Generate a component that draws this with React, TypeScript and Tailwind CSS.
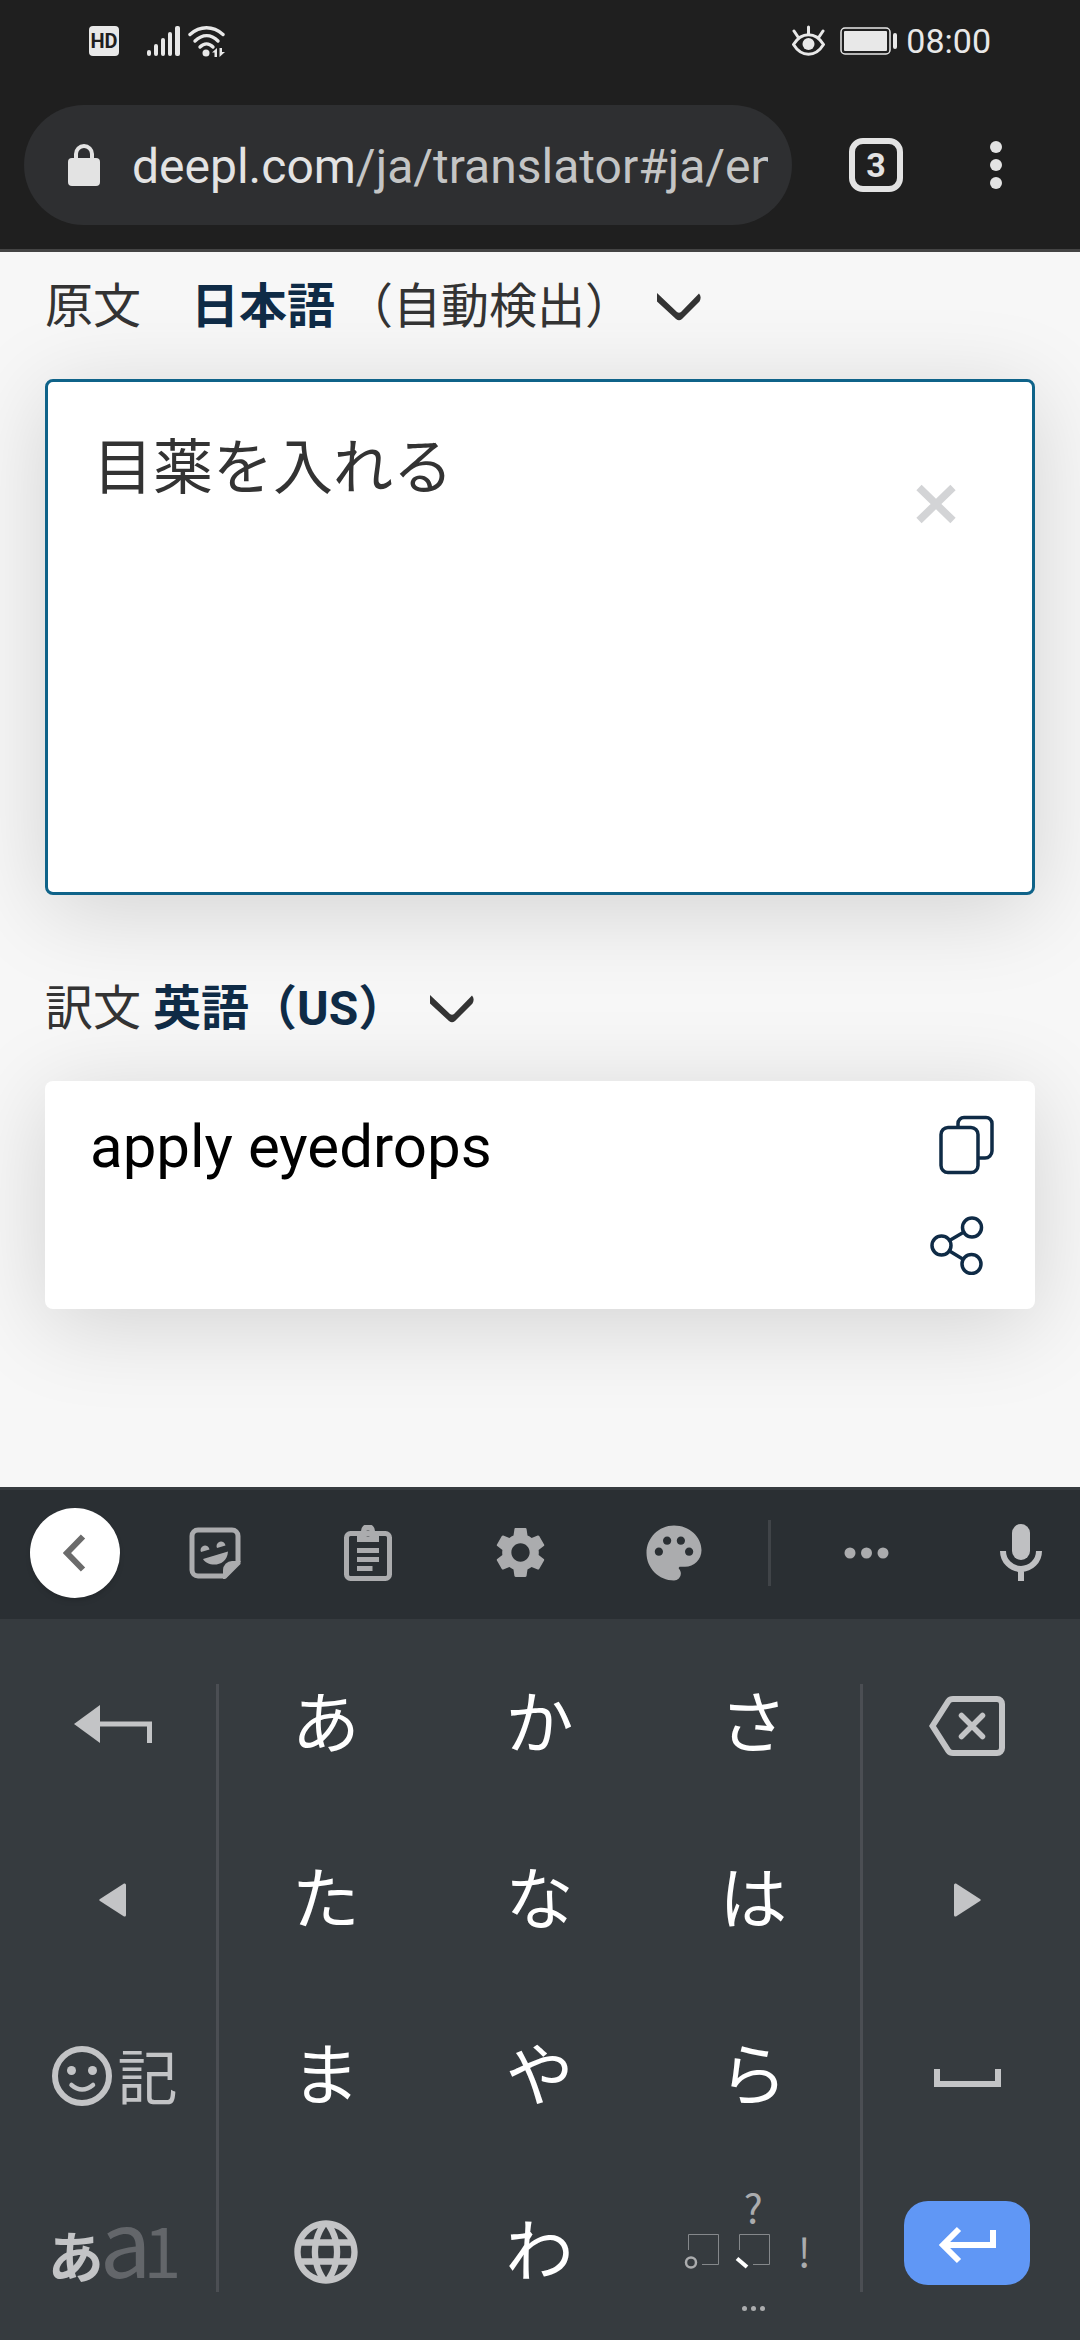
import { useState, type ReactNode } from "react";
import { MdSettings, MdPalette, MdLanguage } from "react-icons/md";

const JP = "font-['Roboto','Noto_Sans_CJK_JP',sans-serif]";
const KANA = "font-['Noto_Sans_CJK_JP',sans-serif]";

function StatusBar() {
  return (
    <div className="flex h-[81px] items-center justify-between px-[89px] text-[#e8e8e8]">
      <div className="flex items-center">
        <span className="flex size-[30px] items-center justify-center rounded-[4px] bg-[#e8e8e8] text-[20px] leading-none font-bold text-[#1f1f1f]">
          HD
        </span>
        <svg className="ml-7 h-[30px] w-[33px]" viewBox="0 0 33 30" fill="currentColor" aria-label="Signal">
          <rect x="0" y="24" width="4" height="6" rx="2" />
          <rect x="7" y="18" width="4" height="12" rx="2" />
          <rect x="14" y="12" width="4" height="18" rx="2" />
          <rect x="21" y="6" width="4" height="24" rx="2" />
          <rect x="28" y="0" width="5" height="30" rx="2" />
        </svg>
        <svg className="ml-2 h-[32px] w-[38px]" viewBox="0 0 38 32" aria-label="Wi-Fi">
          <g fill="none" stroke="currentColor" strokeWidth="3.4" strokeLinecap="round">
            <path d="M2 9.5C12 0.500 25 0.500 35 9.500" />
            <path d="M7 16C14.500 9 23 9 30 16" />
            <path d="M12 22C16 18 21 18 25 22" />
          </g>
          <g fill="currentColor">
            <circle cx="18" cy="28" r="3.500" />
            <path d="M29 23v9h-2.500v-4.500H24zM31.500 23v9l5.500-5h-3v-4z" />
          </g>
        </svg>
      </div>
      <div className="flex items-center">
        <svg className="h-[32px] w-[33px]" viewBox="0 0 33 32" fill="none" stroke="currentColor" strokeWidth="3" strokeLinecap="round" aria-label="Eye comfort">
          <path d="M1.500 19.500C9.500 6.500 23.500 6.500 31.500 19.500C23.500 32.500 9.500 32.500 1.500 19.500Z" strokeLinejoin="round" />
          <circle cx="16.500" cy="19" r="6" fill="currentColor" stroke="none" />
          <path d="M16.500 2v7M2 6l4 6M31 6l-4 6" />
        </svg>
        <svg className="ml-[15px] h-[28px] w-[58px]" viewBox="0 0 58 28" aria-label="Battery">
          <rect x="1" y="1" width="49" height="26" rx="4" fill="none" stroke="currentColor" strokeWidth="1.500" />
          <rect x="4" y="4" width="43" height="20" rx="1" fill="currentColor" />
          <rect x="53" y="6" width="4" height="16" rx="2" fill="currentColor" />
        </svg>
        <time className="ml-2 text-[34px] leading-none">08:00</time>
      </div>
    </div>
  );
}

function BrowserBar() {
  return (
    <div className="flex items-center py-6 pl-6">
      <button type="button" aria-label="Address" className="flex h-[120px] min-w-0 flex-1 items-center rounded-full bg-[#2e2f31] pr-6 pl-[44px]">
        <svg className="h-[42px] w-[32px] shrink-0" viewBox="0 0 32 42" aria-hidden="true">
          <path d="M8 16V10a8 8 0 0 1 16 0v6" fill="none" stroke="#e3e3e3" strokeWidth="4" />
          <rect x="0" y="14" width="32" height="28" rx="4" fill="#e3e3e3" />
        </svg>
        <span className="ml-8 min-w-0 flex-1 overflow-hidden pt-1 text-left text-[48px] leading-[64px] whitespace-nowrap text-[#c4c5c5]">
          <span className="text-[#e3e3e3]">deepl.com</span>/ja/translator#ja/en
        </span>
      </button>
      <button type="button" aria-label="3 open tabs" className="ml-[57px] flex size-[54px] shrink-0 items-center justify-center rounded-[14px] border-6 border-[#e3e3e3] text-[34px] leading-none font-bold text-[#e3e3e3]">
        3
      </button>
      <button type="button" aria-label="More options" className="flex w-[177px] shrink-0 justify-center pl-[9px]">
        <svg className="h-[50px] w-[12px]" viewBox="0 0 12 50" fill="#e3e3e3">
          <circle cx="6" cy="7" r="6" />
          <circle cx="6" cy="25" r="6" />
          <circle cx="6" cy="43" r="6" />
        </svg>
      </button>
    </div>
  );
}

function Chevron() {
  return (
    <svg className="ml-6 h-[28px] w-[44px]" viewBox="0 0 44 28" aria-hidden="true">
      <path d="M0 0L20 19Q22 20.500 24 19L42 0.500Q45 4 42.500 8.500L25 26Q22 28.500 19 26L0 8.500Z" fill="#333333" />
    </svg>
  );
}

const cardShadow = "shadow-[0_15px_90px_rgba(0,0,0,0.15)]";

function Translator() {
  const [source, setSource] = useState("目薬を入れる");
  return (
    <main className="flex-1 overflow-hidden bg-[#f7f7f7] px-[45px] text-[48px] leading-[72px] text-[#333333]">
      <div className="flex items-center pt-[19px]">
        <span className="w-[146px]">原文</span>
        <button type="button" aria-haspopup="listbox" aria-label="原文の言語" className="flex items-center">
          <strong className="mr-2.5 font-bold text-[#0f2b46]">日本語</strong>（自動検出）
          <Chevron />
        </button>
      </div>
      <div className={`mt-9 flex h-[516px] items-start rounded-[8px] border-3 border-[#0f6389] bg-white ${cardShadow}`}>
        <textarea
          aria-label="原文"
          value={source}
          onChange={(e) => setSource(e.target.value)}
          className="h-full min-w-0 flex-1 resize-none bg-transparent pt-[45px] pl-[45px] text-[60px] leading-[84px] outline-none"
        />
        <button type="button" aria-label="クリア" onClick={() => setSource("")} className="mt-[102px] mr-[76px] text-[#d3d4d6]">
          <svg className="size-[40px]" viewBox="0 0 40 40" fill="none" stroke="currentColor" strokeWidth="7.500">
            <path d="M3 3.500L37 36.500M37 3.500L3 36.500" />
          </svg>
        </button>
      </div>
      <div className="mt-[78px] flex items-center">
        <span className="mr-3">訳文</span>
        <button type="button" aria-haspopup="listbox" aria-label="訳文の言語" className="flex items-center font-bold text-[#0f2b46]">
          英語（US）
          <Chevron />
        </button>
      </div>
      <div className={`mt-9 flex h-[228px] items-start justify-between rounded-[8px] bg-white ${cardShadow}`}>
        <p className="pt-[24px] pl-[45px] text-[60px] leading-[84px] text-black">apply eyedrops</p>
        <div className="flex flex-col pt-[34px] text-[#0f2b46]">
          <button type="button" aria-label="コピー" className="pr-[41px] pl-[9px]">
            <svg className="h-[60px] w-[55px]" viewBox="0 0 55 60" fill="none" stroke="currentColor" strokeWidth="3.500">
              <rect x="2" y="12.500" width="37" height="45" rx="7" />
              <path d="M19 12V8.500a6 6 0 0 1 6-6H47a6 6 0 0 1 6 6V36a7 7 0 0 1-7 7H39.500" />
            </svg>
          </button>
          <button type="button" aria-label="共有" className="mt-[40px]">
            <svg className="h-[60px] w-[54px]" viewBox="0 0 54 60" fill="none" stroke="currentColor" strokeWidth="3.500">
              <circle cx="11.500" cy="30.500" r="9.500" />
              <circle cx="42" cy="12.500" r="9.500" />
              <circle cx="41.500" cy="49" r="9.500" />
              <path d="M19.500 25.500L34 17M19.500 36L33.500 44.500" />
            </svg>
          </button>
        </div>
      </div>
    </main>
  );
}

function ToolButton({ label, children }: { label: string; children: ReactNode }) {
  return (
    <button type="button" aria-label={label} className="flex items-center justify-center">
      {children}
    </button>
  );
}

function Toolbar() {
  return (
    <div className="grid h-[132px] grid-cols-[138fr_153fr_153fr_153fr_153fr_21fr_190fr_119fr] items-center border-t-3 border-[#363b3f] bg-[#2a2f33] pb-1 text-[#abacae]">
      <button type="button" aria-label="戻る" className="ml-[30px] flex size-[90px] items-center justify-center rounded-full bg-white shadow-md">
        <svg className="h-[38px] w-[24px]" viewBox="0 0 24 38" fill="none" stroke="#6b6b6b" strokeWidth="6">
          <path d="M20 2.500L4 19L20 35.500" />
        </svg>
      </button>
      <ToolButton label="ステッカー">
        <svg className="size-[52px]" viewBox="0 0 52 52">
          <path d="M9 3H43a6 6 0 0 1 6 6V36L36 49H9a6 6 0 0 1-6-6V9a6 6 0 0 1 6-6Z" fill="none" stroke="currentColor" strokeWidth="5" />
          <g fill="currentColor">
            <path d="M34 52V43a9 9 0 0 1 9-9h9L36 52Z" />
            <path d="M12 25a4.500 4.500 0 1 1 8.500-2.500ZM28 21a4.500 4.500 0 1 1 8.500-2.500ZM14 32L39 24.500C38 41 18 40 14 32Z" />
          </g>
        </svg>
      </ToolButton>
      <ToolButton label="クリップボード">
        <svg className="h-[56px] w-[48px]" viewBox="0 0 48 56">
          <rect x="2.500" y="8.500" width="43" height="45" rx="4" fill="none" stroke="currentColor" strokeWidth="5" />
          <path fillRule="evenodd" fill="currentColor" d="M13 17V6H17a7 7 0 0 1 14 0H35V17ZM24 5.500a3 3 0 1 0 0 6a3 3 0 0 0 0-6Z" />
          <path d="M13 25.500H35M13 34.500H35M13 43.500H28.500" stroke="currentColor" strokeWidth="5" />
        </svg>
      </ToolButton>
      <ToolButton label="設定"><MdSettings className="size-[61px]" /></ToolButton>
      <ToolButton label="テーマ"><MdPalette className="size-[66px]" /></ToolButton>
      <span className="h-[66px] w-[3px] justify-self-end bg-[#404448]" />
      <ToolButton label="その他">
        <svg className="h-[12px] w-[45px]" viewBox="0 0 45 12" fill="currentColor">
          <circle cx="6" cy="6" r="5.500" />
          <circle cx="22.500" cy="6" r="5.500" />
          <circle cx="39" cy="6" r="5.500" />
        </svg>
      </ToolButton>
      <button type="button" aria-label="音声入力" className="flex justify-center text-[#bfc0c2]">
        <svg className="h-[57px] w-[42px]" viewBox="0 0 42 57">
          <rect x="12" y="0" width="18" height="36" rx="9" fill="currentColor" />
          <path d="M3 27a18 18 0 0 0 36 0M21 45V57" fill="none" stroke="currentColor" strokeWidth="6" />
        </svg>
      </button>
    </div>
  );
}

function Key({ label, children }: { label: string; children: ReactNode }) {
  return (
    <button type="button" aria-label={label} className="flex h-[176px] items-center justify-center">
      {children}
    </button>
  );
}

function Kana({ children }: { children: string }) {
  return (
    <button type="button" className="flex h-[176px] items-center justify-center pb-2.5 text-[68px] leading-none text-white">
      {children}
    </button>
  );
}

function PunctuationBox({ mark }: { mark: ReactNode }) {
  return (
    <svg className="h-[36px] w-[36px]" viewBox="0 0 36 36" fill="none">
      <path d="M4.500 16V0.500H34.500V30.500H18" stroke="#85888b" />
      {mark}
    </svg>
  );
}

function Keyboard() {
  return (
    <section aria-label="キーボード" className={`bg-[#363b3f] text-[#c3c4c6] ${KANA}`}>
      <Toolbar />
      <div className="grid grid-cols-[216fr_3px_641fr_3px_217fr] pt-[17px]">
        <div className="grid pl-[9px]">
          <Key label="逆順">
            <svg className="h-[38px] w-[78px]" viewBox="0 0 78 38">
              <path d="M0 19L26 0V38Z" fill="currentColor" />
              <path d="M26 19H75.500V38" fill="none" stroke="currentColor" strokeWidth="5" />
            </svg>
          </Key>
          <Key label="左へ">
            <svg className="h-[34px] w-[27px]" viewBox="0 0 27 34" fill="currentColor">
              <path d="M1 16L25 0.500Q27 0 27 2V32Q27 34 25 33.500L1 18Q-0.500 17 1 16Z" />
            </svg>
          </Key>
          <button type="button" aria-label="絵文字・記号" className="flex h-[176px] items-center justify-center gap-1.5 pl-1">
            <svg className="size-[60px]" viewBox="0 0 60 60" fill="none" stroke="currentColor" strokeLinecap="round">
              <circle cx="30" cy="30" r="27" strokeWidth="6" />
              <path d="M19.500 39Q30 48 41 39" strokeWidth="4.500" />
              <circle cx="19.500" cy="24.500" r="4.500" fill="currentColor" stroke="none" />
              <circle cx="40.500" cy="24.500" r="4.500" fill="currentColor" stroke="none" />
            </svg>
            <span className="pb-1 text-[60px] leading-none">記</span>
          </button>
          <button type="button" aria-label="文字種の切り替え" className="flex h-[176px] items-center justify-center pb-3 leading-[96px]">
            <span className="flex items-baseline">
              <span className="text-[56px] font-bold">あ</span>
              <span className="-mx-1 text-[92px] text-[#63666a]">a</span>
              <span className="-mx-1 text-[68px] text-[#63666a]">1</span>
            </span>
          </button>
        </div>
        <span className="my-12 bg-[#4b4e53]" />
        <div className="grid grid-cols-3">
          {["あ", "か", "さ", "た", "な", "は", "ま", "や", "ら"].map((k) => (
            <Kana key={k}>{k}</Kana>
          ))}
          <Key label="言語の切り替え"><MdLanguage className="size-[76px]" /></Key>
          <Kana>わ</Kana>
          <button type="button" aria-label="句読点" className="grid h-[176px] grid-cols-[36px_36px_36px] content-end items-center justify-center gap-x-[15px] pb-3 text-[40px] leading-[44px] text-[#abacae]">
            <span className="col-span-3">?</span>
            <PunctuationBox mark={<circle cx="7" cy="28.500" r="5" stroke="#abacae" strokeWidth="2.500" />} />
            <PunctuationBox mark={<path d="M2 24.500L12 33" stroke="#ffffff" strokeWidth="4" />} />
            <span className="pb-1">!</span>
            <span className="col-span-3 flex h-[52px] items-center justify-center gap-1 pt-3">
              <i className="size-[5px] rounded-full bg-[#abacae]" />
              <i className="size-[5px] rounded-full bg-[#abacae]" />
              <i className="size-[5px] rounded-full bg-[#abacae]" />
            </span>
          </button>
        </div>
        <span className="my-12 bg-[#4b4e53]" />
        <div className="grid pr-[9px]">
          <Key label="削除">
            <svg className="mt-1 h-[60px] w-[76px]" viewBox="0 0 76 60" fill="none" stroke="currentColor">
              <path d="M24 3H68a5 5 0 0 1 5 5V52a5 5 0 0 1-5 5H24Q21 57 19.500 55L3.500 30L19.500 5Q21 3 24 3Z" strokeWidth="6" />
              <path d="M32.500 19.500L53.500 40.500M53.500 19.500L32.500 40.500" strokeWidth="5.500" strokeLinecap="round" />
            </svg>
          </Key>
          <Key label="右へ">
            <svg className="h-[34px] w-[27px]" viewBox="0 0 27 34" fill="currentColor">
              <path d="M26 16L2 0.500Q0 0 0 2V32Q0 34 2 33.500L26 18Q27.500 17 26 16Z" />
            </svg>
          </Key>
          <Key label="スペース">
            <svg className="mt-1 h-[18px] w-[67px]" viewBox="0 0 67 18" fill="none" stroke="currentColor" strokeWidth="6">
              <path d="M3 0V15H64V0" />
            </svg>
          </Key>
          <div className="flex h-[176px] items-center justify-center pb-[18px]">
            <button type="button" aria-label="確定" className="flex h-[84px] w-[126px] items-center justify-center rounded-[24px] bg-[#6097f5] pt-1">
              <svg className="h-[38px] w-[57px]" viewBox="0 0 57 38" fill="none" stroke="#ffffff" strokeWidth="6">
                <path d="M20 3L4 19L20 35M4 19H54V4" />
              </svg>
            </button>
          </div>
        </div>
      </div>
    </section>
  );
}

export default function App() {
  return (
    <div lang="ja" className={`flex min-h-screen flex-col ${JP}`}>
      <header className="border-b-3 border-[#444444] bg-[#1f1f1f]">
        <StatusBar />
        <BrowserBar />
      </header>
      <Translator />
      <Keyboard />
    </div>
  );
}
